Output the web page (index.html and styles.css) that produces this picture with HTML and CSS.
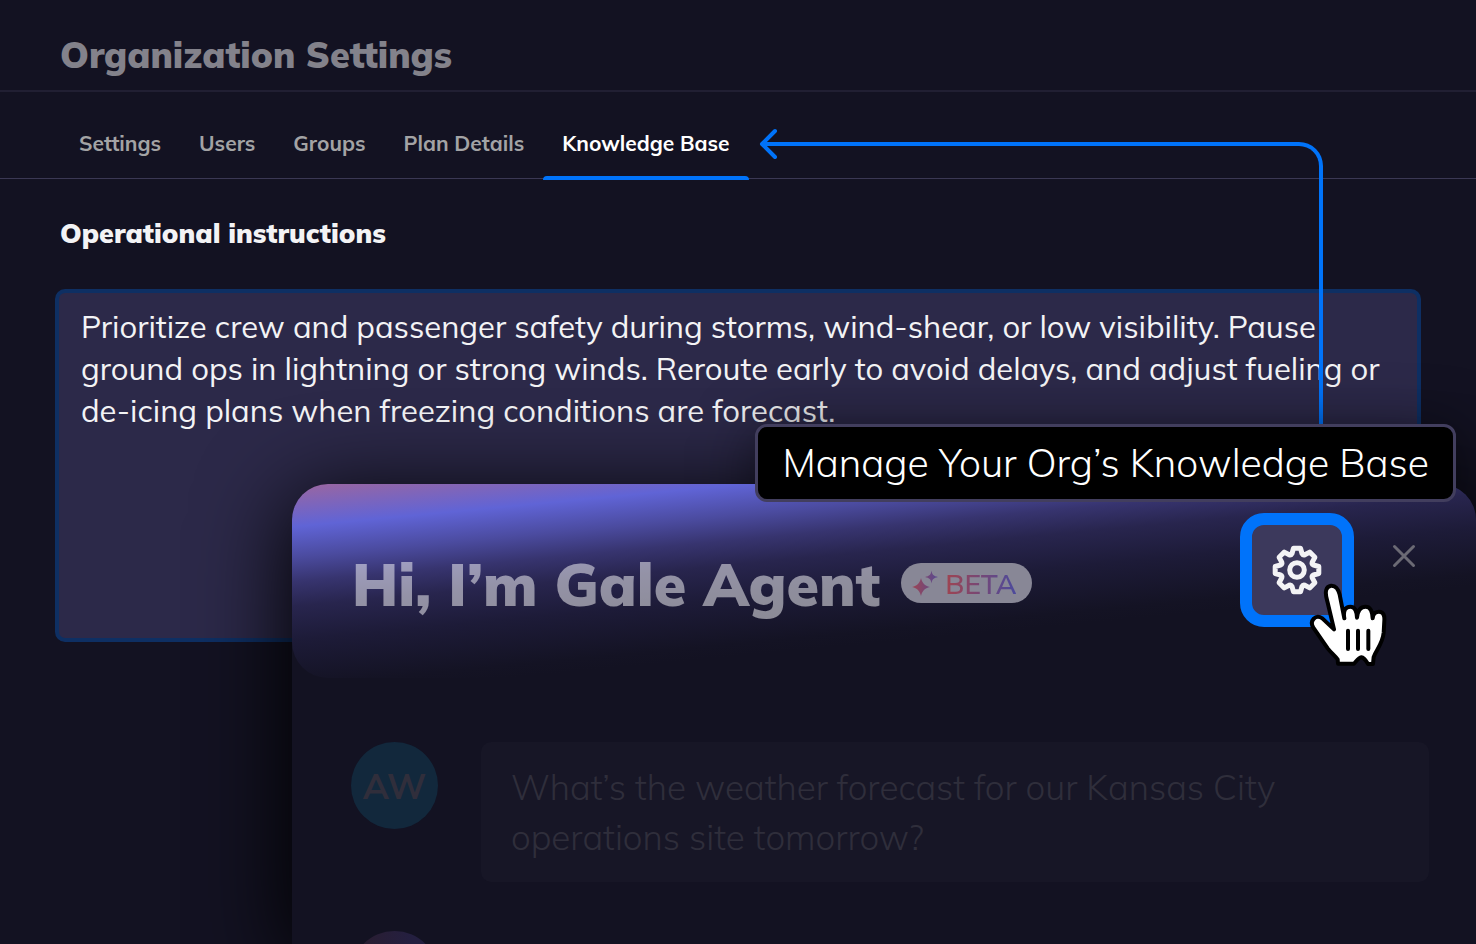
FILE: index.html
```html
<!DOCTYPE html>
<html lang="en">
<head>
  <meta charset="UTF-8" />
  <meta name="viewport" content="width=device-width, initial-scale=1.0"/>
  <title>Organization Settings</title>
  <link rel="stylesheet" href="styles.css">
</head>
<body>
  <header class="page-header">
    <h1>Organization Settings</h1>
  </header>

  <nav class="tabs">
    <a href="#settings">Settings</a>
    <a href="#users">Users</a>
    <a href="#groups">Groups</a>
    <a href="#plan">Plan Details</a>
    <a href="#knowledge" class="active">Knowledge Base</a>
  </nav>

  <main class="content">
    <label class="field-label" for="instructions">Operational instructions</label>
    <textarea id="instructions" class="instructions">Prioritize crew and passenger safety during storms, wind-shear, or low visibility. Pause ground ops in lightning or strong winds. Reroute early to avoid delays, and adjust fueling or de-icing plans when freezing conditions are forecast.</textarea>
  </main>

  <!-- arrow from the tooltip up to the active tab -->
  <div class="connector">
    <svg class="arrow-head" viewBox="0 0 20 32" width="20" height="32" fill="none" stroke="currentColor" stroke-width="4" stroke-linecap="round" stroke-linejoin="round">
      <path d="M16 3 3 16l13 13"/>
    </svg>
  </div>

  <!-- sits under the panel, so the tooltip only darkens the page -->
  <div class="tooltip-shadow"></div>

  <section class="agent">
    <div class="agent-header">
      <h2>Hi, I’m Gale Agent</h2>
      <span class="beta">
        <svg viewBox="0 0 28 28" width="28" height="28">
          <defs>
            <linearGradient id="spark" x1="0" y1="0" x2="28" y2="0" gradientUnits="userSpaceOnUse">
              <stop offset="0" stop-color="#a04450"/>
              <stop offset="1" stop-color="#544a94"/>
            </linearGradient>
          </defs>
          <path fill="url(#spark)" d="M10 9C11.500 14.500 13.500 16.500 19 18C13.500 19.500 11.500 21.500 10 27C8.500 21.500 6.500 19.500 1 18C6.500 16.500 8.500 14.500 10 9ZM20.500 1.500C21.200 5.700 22.500 7 27 8C22.500 9 21.200 10.300 20.500 14.500C19.800 10.300 18.500 9 14 8C18.500 7 19.800 5.700 20.500 1.500Z"/>
        </svg>
        <span class="beta-text">BETA</span>
      </span>
      <button class="gear" type="button" aria-label="Knowledge base settings">
        <svg viewBox="-25 -25 50 50" width="50" height="50" fill="none" stroke="currentColor" stroke-width="5" stroke-linejoin="round">
          <path d="M-3.500-21.800H3.500L5-16.500Q6-14.600 7.800-15.200L12.700-17.900 17.900-12.700 15.200-7.800Q14.600-6 16.500-5L21.800-3.500V3.500L16.500 5Q14.600 6 15.200 7.800L17.900 12.700 12.700 17.900 7.800 15.200Q6 14.600 5 16.500L3.500 21.800H-3.500L-5 16.500Q-6 14.600-7.800 15.200L-12.700 17.900-17.900 12.700-15.200 7.800Q-14.600 6-16.500 5L-21.800 3.500V-3.500L-16.500-5Q-14.600-6-15.200-7.800L-17.900-12.700-12.700-17.900-7.800-15.200Q-6-14.600-5-16.500Z"/>
          <circle r="7.300"/>
        </svg>
      </button>
      <button class="close" type="button" aria-label="Close">
        <svg viewBox="0 0 24 24" width="24" height="24" fill="none" stroke="currentColor" stroke-width="3" stroke-linecap="round">
          <path d="M2.500 2.500l19 19M21.500 2.500l-19 19"/>
        </svg>
      </button>
    </div>

    <div class="messages">
      <div class="message">
        <span class="avatar">AW</span>
        <p class="bubble">What’s the weather forecast for our Kansas City operations site tomorrow?</p>
      </div>
      <div class="message">
        <span class="avatar avatar-agent"></span>
      </div>
    </div>
  </section>

  <div class="tooltip" role="tooltip">Manage Your Org’s Knowledge Base</div>

  <svg class="cursor" viewBox="267 279 237 252" width="79" height="84">
    <path fill="#fff" stroke="#000" stroke-width="12" stroke-linejoin="round" d="M342 418L322 334C313 305 318 289 333 287C347 286 355 297 359 314L373 385C369 362 376 350 391 350C404 350 410 360 411 383C413 362 420 350 437 350C452 350 457 362 458 385C459 370 469 363 482 366C492 369 494 378 493 392L491 428C488 462 467 482 461 501L459 522H444C438 512 433 503 424 502C415 503 409 514 402 521H354L353 508C344 496 332 487 323 475L280 413C267 392 287 372 307 385Z"/>
    <path fill="none" stroke="#000" stroke-width="12" stroke-linecap="round" d="M384 422V477M414 422V477M445 422V477"/>
  </svg>
</body>
</html>
```
FILE: styles.css
```css
* {
  box-sizing: border-box;
}
body {
  position: relative;
  min-height: 100vh;
  margin: 0;
  overflow: hidden;
  background-color: #131222;
  color: #f3f3f5;
  font-family: "Mulish", "Noto Sans", sans-serif;
}
h1, h2, p {
  margin: 0;
}
button {
  padding: 0;
  border: none;
  background: none;
}
svg {
  display: block;
}
.page-header {
  height: 92px;
  padding: 31px 60px 0;
  border-bottom: 2px solid #211f33;
}
h1 {
  color: #83828b;
  font-size: 36px;
  line-height: 48px;
  font-weight: 900;
}
.tabs {
  display: flex;
  height: 88px;
  padding: 0 60px;
  background: linear-gradient(#3b3854, #3b3854) 0 86px / 100% 1px no-repeat;
}
.tabs a {
  position: relative;
  padding: 36px 19px 0;
  color: #a3a3a5;
  font-size: 21px;
  line-height: 30px;
  font-weight: 700;
  text-decoration: none;
  white-space: nowrap;
}
.tabs .active {
  color: #fff;
}
.tabs .active::after {
  content: "";
  position: absolute;
  left: 0;
  right: 0;
  bottom: 0;
  height: 4px;
  border-radius: 4px 4px 0 0;
  background: #0073fa;
}
.content {
  display: flex;
  flex-direction: column;
  padding: 36px 55px 0;
}
.field-label {
  margin: 0 5px 39px;
  font-size: 27px;
  line-height: 34px;
  font-weight: 900;
}
.instructions {
  height: 353px;
  padding: 13px 22px;
  resize: none;
  outline: none;
  border: 4px solid #0e2f63;
  border-radius: 10px;
  background: #2c2949;
  color: #f3f3f5;
  font-family: inherit;
  font-size: 31px;
  line-height: 42px;
  font-weight: 400;
}
.connector {
  position: absolute;
  top: 142px;
  left: 764px;
  right: 153px;
  height: 290px;
  border: solid #0073fa;
  border-width: 4px 4px 0 0;
  border-top-right-radius: 24px;
  pointer-events: none;
}
.arrow-head {
  position: absolute;
  top: -18px;
  left: -5px;
  color: #0073fa;
}
.tooltip-shadow {
  position: absolute;
  top: 424px;
  left: 756px;
  right: 20px;
  height: 78px;
  border-radius: 12px;
  box-shadow: 0 10px 60px rgba(0, 0, 0, 0.6);
  pointer-events: none;
}

/* agent panel over the page */
.agent {
  position: absolute;
  top: 484px;
  left: 292px;
  right: 0;
  bottom: 0;
  display: flex;
  flex-direction: column;
  border-radius: 36px 36px 0 0;
  background: #131222;
  box-shadow: 0 16px 90px 4px #000;
}
.agent-header {
  display: flex;
  flex: none;
  align-items: flex-start;
  height: 194px;
  padding: 29px 60px 0 60px;
  border-radius: 36px;
  background: linear-gradient(174.6deg, #9b66a0 0%, #6064d6 14%, #4b4b9f 24%, #37346f 32%, #28254e 40%, #1d1b38 51%, #141324 66%, #131222 70%);
}
h2 {
  margin: 31px 21px 0 0;
  color: rgba(255, 255, 255, 0.5);
  font-size: 59px;
  line-height: 80px;
  font-weight: 900;
  white-space: nowrap;
}
.beta {
  display: flex;
  align-items: center;
  gap: 6px;
  height: 40px;
  margin-top: 50px;
  padding: 0 16px 0 10px;
  border-radius: 20px;
  background: #888796;
}
.beta-text {
  padding-top: 2px;
  background: linear-gradient(90deg, #a04450, #4c4a9c);
  -webkit-background-clip: text;
  background-clip: text;
  color: transparent;
  font-size: 28px;
  line-height: 40px;
  font-weight: 600;
}
.gear {
  display: grid;
  place-items: center;
  width: 114px;
  height: 114px;
  margin-left: auto;
  border: 12px solid #0073fa;
  border-radius: 24px;
  background: #3c395c;
  color: #f3f3f5;
}
.close {
  margin: 31px 0 0 38px;
  color: #6b6a74;
}
.messages {
  display: flex;
  flex: 1;
  flex-direction: column;
  gap: 49px;
  min-height: 0;
  padding: 64px 47px 0 59px;
  overflow: hidden;
}
.message {
  display: flex;
  flex: none;
  align-items: flex-start;
  gap: 43px;
}
.avatar {
  display: grid;
  place-items: center;
  flex: none;
  width: 87px;
  height: 87px;
  border-radius: 50%;
  background: #12283c;
  color: #302e3b;
  font-size: 35px;
  font-weight: 700;
}
.avatar-agent {
  background: linear-gradient(90deg, #2b1d2e, #241f40 70%);
}
.bubble {
  flex: 1;
  padding: 20px 30px;
  border-radius: 10px;
  background: #171626;
  color: #2f2e3b;
  font-size: 35px;
  line-height: 50px;
  font-weight: 300;
}
.tooltip {
  position: absolute;
  top: 424px;
  right: 20px;
  padding: 9px 24px;
  border: 3px solid #423e5e;
  border-radius: 12px;
  background: #000;
  color: #fff;
  font-size: 39px;
  line-height: 54px;
  font-weight: 300;
  white-space: nowrap;
}
.cursor {
  position: absolute;
  top: 583px;
  right: 88px;
}
```
